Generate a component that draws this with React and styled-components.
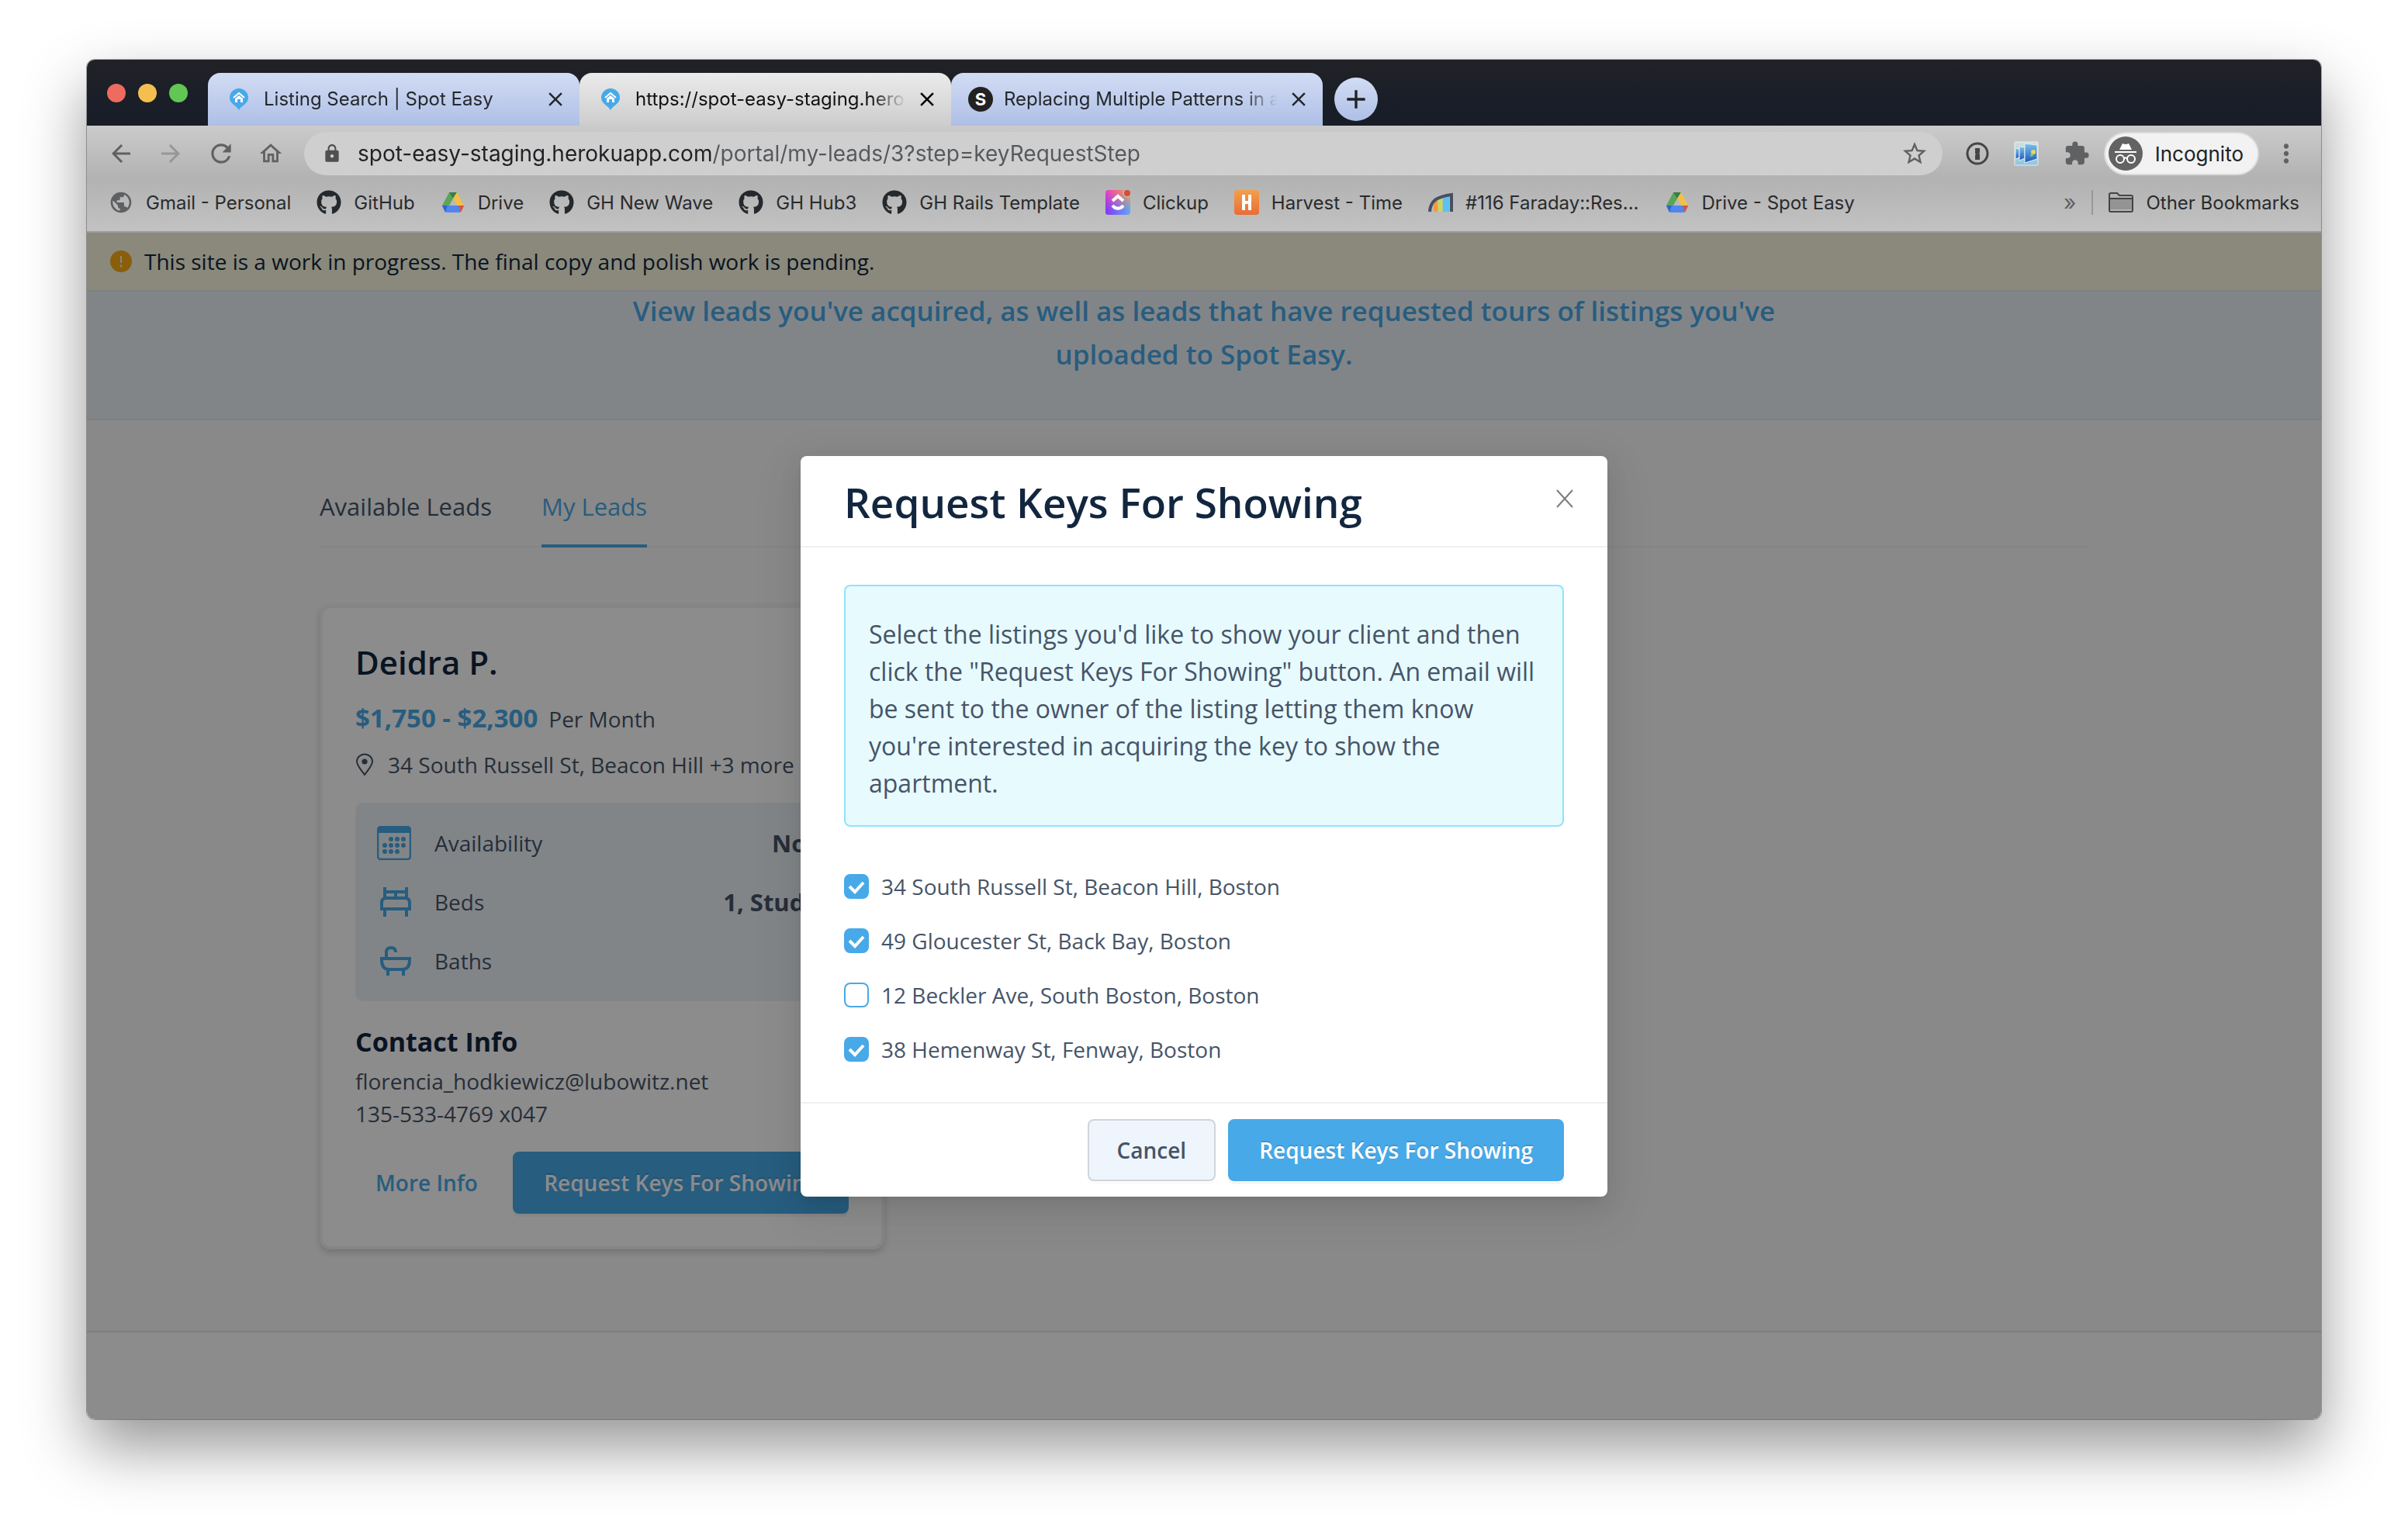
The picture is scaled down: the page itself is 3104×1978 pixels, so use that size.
import React, { useState } from "react";
import styled, { createGlobalStyle } from "styled-components";
import {
  MdArrowBack,
  MdArrowForward,
  MdRefresh,
  MdOutlineHome,
  MdLock,
  MdStarOutline,
  MdExtension,
  MdMoreVert,
  MdPublic,
  MdClose,
  MdAdd,
} from "react-icons/md";
import { FaGithub } from "react-icons/fa";

const browserTabs = [
  { id: 1, title: "Listing Search | Spot Easy", icon: "pin" },
  {
    id: 2,
    title: "https://spot-easy-staging.hero",
    icon: "pin",
    active: true,
  },
  { id: 3, title: "Replacing Multiple Patterns in a", icon: "s" },
];

const bookmarks = [
  { name: "Gmail - Personal", icon: "globe" },
  { name: "GitHub", icon: "github" },
  { name: "Drive", icon: "drive" },
  { name: "GH New Wave", icon: "github" },
  { name: "GH Hub3", icon: "github" },
  { name: "GH Rails Template", icon: "github" },
  { name: "Clickup", icon: "clickup" },
  { name: "Harvest - Time", icon: "harvest" },
  { name: "#116 Faraday::Res...", icon: "bridge" },
  { name: "Drive - Spot Easy", icon: "drive" },
];

const listings = [
  { id: 1, address: "34 South Russell St, Beacon Hill, Boston", checked: true },
  { id: 2, address: "49 Gloucester St, Back Bay, Boston", checked: true },
  { id: 3, address: "12 Beckler Ave, South Boston, Boston", checked: false },
  { id: 4, address: "38 Hemenway St, Fenway, Boston", checked: true },
];

const PinFavicon = () => (
  <svg width="24" height="28" viewBox="0 0 24 28">
    <path
      d="M12 28C9 22 0 20 0 12a12 12 0 0 1 24 0c0 8-9 10-12 16z"
      fill="#48a9e8"
    />
    <path d="M5 12l7-6 7 6" fill="none" stroke="#fff" strokeWidth="2" />
    <path d="M7 13l5-4 5 4v5h-3v-4h-4v4H7z" fill="#fff" />
  </svg>
);

const DriveIcon = () => (
  <svg width="28" height="26" viewBox="0 0 28 26">
    <path d="M9 0h5v9L5 25 0 17z" fill="#5aa55a" />
    <path d="M9 0h10l-5 8z" fill="#3a7d44" />
    <path d="M19 0l9 17h-9L14 8z" fill="#f3c045" />
    <path d="M0 17h9l-5 9z" fill="#2f66d0" />
    <path d="M28 17h-9l5 9z" fill="#dc5142" />
    <path d="M5 17h18l2 3-2 6H5l-2-6z" fill="#5187ec" />
    <path d="M0 17h7l-3 8z" fill="#2f66d0" />
    <path d="M28 17h-7l3 8z" fill="#dc5142" />
    <path d="M9 17l5-9 5 9z" fill="#b9b9b9" />
  </svg>
);

const ClickupIcon = () => (
  <svg width="32" height="32" viewBox="0 0 32 32">
    <defs>
      <linearGradient id="cuTop" x1="0" y1="0" x2="1" y2="0">
        <stop offset="0" stopColor="#e63ccf" />
        <stop offset="1" stopColor="#f0a63c" />
      </linearGradient>
      <linearGradient id="cuBottom" x1="0" y1="0" x2="1" y2="0">
        <stop offset="0" stopColor="#8636f5" />
        <stop offset="1" stopColor="#62a9f2" />
      </linearGradient>
      <linearGradient id="cuFade" x1="0" y1="0" x2="0" y2="1">
        <stop offset="0.1" stopColor="#000" />
        <stop offset="0.8" stopColor="#fff" />
      </linearGradient>
      <mask id="cuMask">
        <rect width="32" height="32" fill="url(#cuFade)" />
      </mask>
    </defs>
    <rect width="32" height="32" rx="4" fill="url(#cuTop)" />
    <rect width="32" height="32" rx="4" fill="url(#cuBottom)" mask="url(#cuMask)" />
    <path d="M9 14l7-6 7 6" fill="none" stroke="#fff" strokeWidth="4" />
    <path d="M9 20c4 5 10 5 14 0" fill="none" stroke="#fff" strokeWidth="4" />
    <circle cx="28" cy="4" r="6" fill="#b4b4b4" />
    <circle cx="28" cy="4" r="4" fill="#de4a33" />
  </svg>
);

const HarvestIcon = () => (
  <svg width="32" height="32" viewBox="0 0 32 32">
    <defs>
      <linearGradient id="harvest" x1="0" y1="0" x2="0" y2="1">
        <stop offset="0" stopColor="#f2a04c" />
        <stop offset="1" stopColor="#e96c36" />
      </linearGradient>
    </defs>
    <rect width="32" height="32" rx="4" fill="url(#harvest)" />
    <path d="M10 6h4v8h4V6h4v20h-4v-8h-4v8h-4z" fill="#fff" />
  </svg>
);

const BridgeIcon = () => (
  <svg width="32" height="26" viewBox="0 0 32 26">
    <path d="M7 25V13l5-3v15z" fill="#f09a45" />
    <path d="M13 25V9l5-1v17z" fill="#c9dc4b" />
    <path d="M19 25V8l8-3v20z" fill="#5cc3ea" />
    <path
      d="M2 25C3 11 10 6 30 3v22"
      fill="none"
      stroke="#475062"
      strokeWidth="4"
    />
  </svg>
);

const FolderIcon = () => (
  <svg width="32" height="26" viewBox="0 0 32 26">
    <path
      d="M1 23V3a2 2 0 0 1 2-2h8l3 3h15a2 2 0 0 1 2 2v17a2 2 0 0 1-2 2H3a2 2 0 0 1-2-2z"
      fill="#b4b4b4"
      stroke="#444"
      strokeWidth="2"
    />
    <path d="M2 9h28v13H2z" fill="#949494" />
    <path d="M1 8h30" stroke="#444" strokeWidth="2" />
  </svg>
);

const IncognitoIcon = () => (
  <svg width="44" height="44" viewBox="0 0 44 44">
    <circle cx="22" cy="22" r="22" fill="#636363" />
    <path d="M14 17l4-8q4 2 8 0l4 8z" fill="#fff" />
    <path d="M8 20h28" stroke="#fff" strokeWidth="2" />
    <g fill="none" stroke="#fff" strokeWidth="2">
      <circle cx="15" cy="29" r="5" />
      <circle cx="29" cy="29" r="5" />
      <path d="M20 28q2-1 4 0" />
    </g>
  </svg>
);

const OnePasswordIcon = () => (
  <svg width="30" height="30" viewBox="0 0 30 30">
    <circle cx="15" cy="15" r="13" fill="none" stroke="#454545" strokeWidth="3" />
    <path d="M12 8h6v6l-1 1 1 1v7h-6v-6l1-1-1-1z" fill="#454545" />
  </svg>
);

const FramesIcon = () => (
  <svg width="32" height="32" viewBox="0 0 32 32">
    <defs>
      <linearGradient id="framesBg" x1="0" y1="0" x2="0" y2="1">
        <stop offset="0" stopColor="#d5dfda" />
        <stop offset="1" stopColor="#8fc4dc" />
      </linearGradient>
      <linearGradient id="framesGlass" x1="0" y1="0" x2="0" y2="1">
        <stop offset="0" stopColor="#7cc4ee" />
        <stop offset="1" stopColor="#1f55b4" />
      </linearGradient>
    </defs>
    <rect x="1" y="1" width="30" height="30" rx="1" fill="url(#framesBg)" stroke="#e6efef" />
    <path d="M2 9l5 1v11l-5 2z" fill="url(#framesGlass)" stroke="#e4f2fa" />
    <path d="M7 7l7 1v14l-7 3z" fill="url(#framesGlass)" stroke="#e4f2fa" />
    <path d="M14 3l16 2v18l-16 5z" fill="url(#framesGlass)" stroke="#e4f2fa" />
    <circle cx="25" cy="14" r="3" fill="#f2d25c" />
    <circle cx="23" cy="18" r="2" fill="#6fcf7c" />
  </svg>
);

const WarningIcon = () => (
  <svg width="28" height="28" viewBox="0 0 28 28">
    <circle cx="14" cy="14" r="14" fill="#faad14" />
    <path d="M14 7v9" stroke="#fbf8df" strokeWidth="2" />
    <circle cx="14" cy="20" r="1.4" fill="#fbf8df" />
  </svg>
);

const LocationIcon = () => (
  <svg width="24" height="30" viewBox="0 0 24 30">
    <path
      d="M12 28C7 21 2 16 2 11a10 9.500 0 0 1 20 0c0 5-5 10-10 17z"
      fill="none"
      stroke="#465468"
      strokeWidth="2"
    />
    <circle cx="12" cy="11" r="3.600" fill="#465468" />
  </svg>
);

const CalendarIcon = () => (
  <svg width="44" height="44" viewBox="0 0 44 44">
    <rect x="1" y="1" width="42" height="42" rx="4" fill="none" stroke="#48a9e8" strokeWidth="2.600" />
    <path d="M1 9V5a4 4 0 0 1 4-4h34a4 4 0 0 1 4 4v4z" fill="#48a9e8" />
    <g fill="#48a9e8">
      {[18, 26, 34].map((x) => (
        <circle key={x} cx={x} cy="17" r="3" />
      ))}
      {[10, 18, 26, 34].map((x) => (
        <circle key={x} cx={x} cy="25" r="3" />
      ))}
      {[10, 18, 26].map((x) => (
        <circle key={x} cx={x} cy="33" r="3" />
      ))}
    </g>
  </svg>
);

const BedIcon = () => (
  <svg width="40" height="38" viewBox="0 0 40 38">
    <g fill="none" stroke="#48a9e8" strokeWidth="4">
      <path d="M6 0v16M34 0v16M6 6h28M20 6v8M6 28v10M34 28v10" />
      <path d="M2 28V20q0-6 6-6h24q6 0 6 6v8z" />
    </g>
  </svg>
);

const BathIcon = () => (
  <svg width="40" height="38" viewBox="0 0 40 38">
    <g fill="none" stroke="#48a9e8" strokeWidth="4">
      <path d="M8 16V8q0-6 6-6t6 6M10 30v8M30 30v8" />
      <path d="M2 16h36v2q0 12-10 12H12Q2 30 2 18z" />
    </g>
  </svg>
);

const bookmarkIcons = {
  globe: <MdPublic size={32} color="#5f6062" />,
  github: <FaGithub size={32} color="#24292e" />,
  drive: <DriveIcon />,
  clickup: <ClickupIcon />,
  harvest: <HarvestIcon />,
  bridge: <BridgeIcon />,
};

const stats = [
  { label: "Availability", value: "Now", icon: <CalendarIcon /> },
  { label: "Beds", value: "1, Studio", icon: <BedIcon /> },
  { label: "Baths", value: "1", icon: <BathIcon /> },
];

const BrowserChrome = () => (
  <header>
    <TabStrip>
      <TrafficLights>
        <Light $color="#ed6b5f" />
        <Light $color="#f5bf4f" />
        <Light $color="#62c655" />
      </TrafficLights>
      {browserTabs.map((tab) => (
        <BrowserTab key={tab.id} $active={tab.active}>
          {tab.icon === "pin" ? <PinFavicon /> : <LetterFavicon>S</LetterFavicon>}
          <TabTitle $active={tab.active}>{tab.title}</TabTitle>
          <PlainButton aria-label="Close tab">
            <MdClose size={30} color={tab.active ? "#000" : "#25282c"} />
          </PlainButton>
        </BrowserTab>
      ))}
      <NewTabButton aria-label="New tab">
        <MdAdd size={40} color="#202124" />
      </NewTabButton>
    </TabStrip>

    <Toolbar>
      <NavRow>
        <NavButtons>
          <PlainButton aria-label="Back">
            <MdArrowBack size={36} />
          </PlainButton>
          <PlainButton aria-label="Forward" disabled>
            <MdArrowForward size={36} />
          </PlainButton>
          <PlainButton aria-label="Reload">
            <MdRefresh size={38} />
          </PlainButton>
          <PlainButton aria-label="Home">
            <MdOutlineHome size={34} />
          </PlainButton>
        </NavButtons>
        <Omnibox>
          <MdLock size={26} color="#505050" />
          <UrlInput
            aria-label="Address"
            defaultValue="spot-easy-staging.herokuapp.com/portal/my-leads/3?step=keyRequestStep"
          />
          <PlainButton aria-label="Bookmark this page">
            <MdStarOutline size={36} />
          </PlainButton>
        </Omnibox>
        <Extensions>
          <PlainButton aria-label="1Password">
            <OnePasswordIcon />
          </PlainButton>
          <PlainButton aria-label="Frames">
            <FramesIcon />
          </PlainButton>
          <PlainButton aria-label="Extensions">
            <MdExtension size={34} />
          </PlainButton>
        </Extensions>
        <IncognitoPill>
          <IncognitoIcon />
          Incognito
        </IncognitoPill>
        <PlainButton aria-label="Menu">
          <MdMoreVert size={38} />
        </PlainButton>
      </NavRow>

      <BookmarkBar>
        {bookmarks.map((bookmark) => (
          <Bookmark key={bookmark.name} href="#">
            <BookmarkIcon>{bookmarkIcons[bookmark.icon]}</BookmarkIcon>
            {bookmark.name}
          </Bookmark>
        ))}
        <OtherBookmarks>
          <More aria-label="More bookmarks">»</More>
          <Divider />
          <Bookmark href="#">
            <BookmarkIcon>
              <FolderIcon />
            </BookmarkIcon>
            Other Bookmarks
          </Bookmark>
        </OtherBookmarks>
      </BookmarkBar>
    </Toolbar>
  </header>
);

const LeadCard = () => (
  <Card>
    <LeadName>Deidra P.</LeadName>
    <PriceRow>
      <Price>$1,750 - $2,300</Price>
      Per Month
    </PriceRow>
    <AddressRow>
      <LocationIcon />
      34 South Russell St, Beacon Hill +3 more
    </AddressRow>
    <Stats>
      {stats.map((stat) => (
        <StatRow key={stat.label}>
          <StatIcon>{stat.icon}</StatIcon>
          {stat.label}
          <StatValue>{stat.value}</StatValue>
        </StatRow>
      ))}
    </Stats>
    <ContactTitle>Contact Info</ContactTitle>
    <ContactLine>florencia_hodkiewicz@lubowitz.net</ContactLine>
    <ContactLine>135-533-4769 x047</ContactLine>
    <CardActions>
      <LinkButton>More Info</LinkButton>
      <PrimaryButton>Request Keys For Showing</PrimaryButton>
    </CardActions>
  </Card>
);

const KeyRequestModal = () => {
  const [items, setItems] = useState(listings);

  const handleToggle = (id) => {
    setItems(
      items.map((item) =>
        item.id === id ? { ...item, checked: !item.checked } : item
      )
    );
  };

  return (
    <Overlay>
      <Modal role="dialog" aria-labelledby="modal-title">
        <ModalHeader>
          <ModalTitle id="modal-title">Request Keys For Showing</ModalTitle>
          <CloseButton aria-label="Close">
            <svg width="22" height="24" viewBox="0 0 22 24">
              <path d="M1 1l20 22M21 1L1 23" stroke="#7d7d7d" strokeWidth="2" />
            </svg>
          </CloseButton>
        </ModalHeader>
        <ModalBody>
          <Notice>
            Select the listings you'd like to show your client and then click
            the "Request Keys For Showing" button. An email will be sent to the
            owner of the listing letting them know you're interested in
            acquiring the key to show the apartment.
          </Notice>
          <ListingOptions>
            {items.map((item) => (
              <ListingOption key={item.id}>
                <CheckboxBox>
                  <Checkbox
                    type="checkbox"
                    checked={item.checked}
                    onChange={() => handleToggle(item.id)}
                  />
                  {item.checked && (
                    <CheckMark width="32" height="32" viewBox="0 0 32 32">
                      <path
                        d="M7 16l7 7 11-12"
                        fill="none"
                        stroke="#fff"
                        strokeWidth="4"
                      />
                    </CheckMark>
                  )}
                </CheckboxBox>
                {item.address}
              </ListingOption>
            ))}
          </ListingOptions>
        </ModalBody>
        <ModalFooter>
          <SecondaryButton>Cancel</SecondaryButton>
          <PrimaryButton>Request Keys For Showing</PrimaryButton>
        </ModalFooter>
      </Modal>
    </Overlay>
  );
};

const App = () => (
  <Desktop>
    <GlobalStyle />
    <BrowserWindow>
      <BrowserChrome />
      <Viewport>
        <Banner>
          <WarningIcon />
          This site is a work in progress. The final copy and polish work is
          pending.
        </Banner>
        <Hero>
          <HeroText>
            View leads you've acquired, as well as leads that have requested
            tours of listings you've uploaded to Spot Easy.
          </HeroText>
        </Hero>
        <Main>
          <Content>
            <PageTabs>
              <PageTab href="#">Available Leads</PageTab>
              <PageTab href="#" $active>
                My Leads
              </PageTab>
            </PageTabs>
            <LeadCard />
          </Content>
        </Main>
        <Footer />
        <KeyRequestModal />
      </Viewport>
    </BrowserWindow>
  </Desktop>
);

const GlobalStyle = createGlobalStyle`
  * {
    box-sizing: border-box;
  }

  body {
    margin: 0;
    background: #fff;
  }

  h1, h2, h3, p {
    margin: 0;
  }

  a {
    text-decoration: none;
  }

  button, input {
    font: inherit;
  }

  svg {
    display: block;
    flex-shrink: 0;
  }
`;

const Desktop = styled.div`
  display: flex;
  min-height: 100vh;
  padding: 77px 112px 148px;
`;

const BrowserWindow = styled.div`
  flex: 1;
  min-width: 0;
  display: flex;
  flex-direction: column;
  overflow: hidden;
  border-radius: 10px;
  box-shadow: 0 0 0 1px rgba(0, 0, 0, 0.3), 0 36px 80px rgba(0, 0, 0, 0.42);
  font-family: Inter, "Liberation Sans", sans-serif;
`;

const TabStrip = styled.div`
  display: flex;
  align-items: flex-end;
  height: 85px;
  background: linear-gradient(#212226, #1a1e28 60%, #191d27);
`;

const TrafficLights = styled.div`
  display: flex;
  align-self: center;
  gap: 16px;
  width: 156px;
  padding-left: 26px;
`;

const Light = styled.span`
  width: 24px;
  height: 24px;
  border-radius: 50%;
  background: ${({ $color }) => $color};
`;

const BrowserTab = styled.div`
  display: flex;
  align-items: center;
  width: 479px;
  height: 68px;
  padding: 0 16px 0 28px;
  border-radius: 16px 16px 0 0;
  background: ${({ $active }) =>
    $active
      ? "linear-gradient(#ebebeb, #cdcdcd)"
      : "linear-gradient(#d2dcf4, #aebfe6)"};
`;

const LetterFavicon = styled.span`
  display: flex;
  align-items: center;
  justify-content: center;
  width: 32px;
  height: 32px;
  margin: 0 -6px;
  border-radius: 50%;
  background: #222;
  color: #fff;
  font-size: 22px;
  font-weight: 700;
`;

const TabTitle = styled.span`
  flex: 1;
  min-width: 0;
  margin: 0 12px 0 20px;
  overflow: hidden;
  white-space: nowrap;
  font-size: 24px;
  line-height: 32px;
  color: ${({ $active }) => ($active ? "#111" : "#25282c")};
  mask-image: linear-gradient(to right, #000 87%, transparent);
`;

const PlainButton = styled.button`
  display: flex;
  align-items: center;
  justify-content: center;
  padding: 0;
  border: none;
  background: none;
  color: #606163;

  &:disabled {
    color: #979797;
  }
`;

const NewTabButton = styled(PlainButton)`
  width: 56px;
  height: 56px;
  margin: 0 0 6px 15px;
  border-radius: 50%;
  background: linear-gradient(#d2dcf4, #aebfe6);
`;

const Toolbar = styled.div`
  height: 138px;
  padding: 8px 26px 0;
  border-bottom: 2px solid #9c9c9c;
  background: linear-gradient(#cbcbcb, #b2b2b2 50%, #c2c2c2);
`;

const NavRow = styled.div`
  display: flex;
  align-items: center;
  height: 56px;
`;

const NavButtons = styled.div`
  display: flex;
  gap: 28px;
  width: 254px;
`;

const Omnibox = styled.div`
  flex: 1;
  display: flex;
  align-items: center;
  height: 56px;
  padding: 0 18px 0 23px;
  border-radius: 28px;
  background: #cfcfcf;
`;

/* host part of the url is darker than the path */
const UrlInput = styled.input`
  flex: 1;
  min-width: 0;
  padding: 0;
  margin-left: 20px;
  border: none;
  outline: none;
  font-size: 28px;
  color: transparent;
  background: linear-gradient(to right, #202124 456px, #55585c 456px);
  background-clip: text;
`;

const Extensions = styled.div`
  display: flex;
  align-items: center;
  gap: 32px;
  margin: 0 18px 0 30px;
`;

const IncognitoPill = styled.div`
  display: flex;
  align-items: center;
  gap: 16px;
  height: 56px;
  margin-right: 16px;
  padding: 0 18px 0 4px;
  border: 2px solid #dadada;
  border-radius: 28px;
  background: #f2f2f2;
  color: #202124;
  font-size: 26px;
`;

const BookmarkBar = styled.nav`
  display: flex;
  align-items: center;
  gap: 33px;
  height: 70px;
  padding: 0 2px;
`;

const Bookmark = styled.a`
  display: flex;
  align-items: center;
  gap: 16px;
  white-space: nowrap;
  font-size: 24px;
  color: #2a2b2d;
`;

const BookmarkIcon = styled.span`
  display: flex;
  justify-content: center;
  width: 32px;
`;

const OtherBookmarks = styled.div`
  display: flex;
  align-items: center;
  gap: 20px;
  margin-left: auto;
`;

const More = styled(PlainButton)`
  font-size: 28px;
`;

const Divider = styled.span`
  width: 2px;
  height: 32px;
  background: #989898;
`;

const Viewport = styled.div`
  flex: 1;
  position: relative;
  display: flex;
  flex-direction: column;
  background: #fff;
  color: #465468;
  font-family: "Open Sans", "Noto Sans", sans-serif;
  font-size: 28px;
`;

const Banner = styled.div`
  display: flex;
  align-items: center;
  gap: 16px;
  height: 76px;
  padding: 0 30px;
  border-bottom: 2px solid #e2e8f0;
  background: #fbf9e0;
  color: #12263f;
`;

/* scrolled a little way under the banner */
const Hero = styled.section`
  display: flex;
  align-items: flex-end;
  justify-content: center;
  height: 166px;
  overflow: hidden;
  padding-bottom: 55px;
  border-bottom: 2px solid #e2e8f0;
  background: #edf2f7;
`;

const HeroText = styled.p`
  max-width: 1520px;
  font-size: 35px;
  line-height: 56px;
  font-weight: 600;
  text-align: center;
  color: #48a9e8;
`;

const Main = styled.main`
  flex: 1;
  padding: 0 300px 104px;
  background: #f9f9f9;
`;

const Content = styled.div`
  max-width: 2280px;
  margin: 0 auto;
`;

const PageTabs = styled.nav`
  display: flex;
  gap: 64px;
  margin-bottom: 74px;
  box-shadow: inset 0 -2px #f0f0f0;
`;

const PageTab = styled.a`
  padding: 90px 0 28px;
  line-height: 42px;
  border-bottom: 4px solid ${({ $active }) => ($active ? "#48a9e8" : "transparent")};
  font-size: 31px;
  color: ${({ $active }) => ($active ? "#48a9e8" : "#465468")};
`;

const Card = styled.article`
  width: 728px;
  padding: 42px;
  border: 4px solid #f0f3f6;
  border-radius: 14px;
  background: #fff;
  box-shadow: 0 4px 8px rgba(0, 0, 0, 0.16);
  font-weight: 500;
`;

const LeadName = styled.h2`
  font-size: 42px;
  line-height: 56px;
  font-weight: 600;
  color: #12263f;
`;

const PriceRow = styled.div`
  display: flex;
  align-items: baseline;
  gap: 14px;
  margin-top: 20px;
  line-height: 48px;
`;

const Price = styled.strong`
  font-size: 33px;
  font-weight: 700;
  color: #48a9e8;
`;

const AddressRow = styled.div`
  display: flex;
  align-items: center;
  gap: 18px;
  margin: 14px 0 28px;
  white-space: nowrap;
  line-height: 42px;
`;

const Stats = styled.div`
  padding: 14px 28px;
  border-radius: 10px;
  background: #edf2f7;
`;

const StatRow = styled.div`
  display: flex;
  align-items: center;
  height: 76px;
`;

const StatIcon = styled.span`
  display: flex;
  justify-content: flex-end;
  width: 44px;
  margin-right: 30px;
`;

const StatValue = styled.strong`
  margin-left: auto;
  font-size: 31px;
  font-weight: 700;
`;

const ContactTitle = styled.h3`
  margin: 26px 0 4px;
  font-size: 34px;
  line-height: 52px;
  font-weight: 700;
  color: #12263f;
`;

const ContactLine = styled.p`
  line-height: 42px;
`;

const CardActions = styled.div`
  display: flex;
  justify-content: space-between;
  margin-top: 28px;
`;

const BaseButton = styled.button`
  height: 80px;
  padding: 0 38px;
  border: 2px solid transparent;
  border-radius: 8px;
  font-size: 28px;
  font-weight: 600;
  white-space: nowrap;
`;

const PrimaryButton = styled(BaseButton)`
  border-color: #48a9e8;
  background: #48a9e8;
  color: #fff;
  text-shadow: 0 -2px 0 rgba(0, 0, 0, 0.12);
  box-shadow: 0 4px 0 rgba(0, 0, 0, 0.04);
`;

const SecondaryButton = styled(BaseButton)`
  padding: 0 36px;
  border-color: #d0d5da;
  background: #eff5fd;
  color: #465468;
  box-shadow: 0 4px 0 rgba(0, 0, 0, 0.015);
`;

const LinkButton = styled(BaseButton)`
  padding: 0 24px;
  background: none;
  color: #48a9e8;
`;

const Footer = styled.footer`
  height: 114px;
  border-top: 2px solid #e6e6e6;
  background: #fff;
`;

const Overlay = styled.div`
  position: absolute;
  inset: 0;
  display: flex;
  align-items: flex-start;
  justify-content: center;
  padding-top: 288px;
  background: rgba(0, 0, 0, 0.45);
`;

const Modal = styled.section`
  width: 1040px;
  border-radius: 8px;
  background: #fff;
  box-shadow: 0 6px 12px -8px rgba(0, 0, 0, 0.12),
    0 12px 32px rgba(0, 0, 0, 0.08), 0 18px 56px 16px rgba(0, 0, 0, 0.05);
`;

const ModalHeader = styled.div`
  display: flex;
  align-items: flex-start;
  justify-content: space-between;
  height: 118px;
  padding: 24px 44px 0 56px;
  border-bottom: 2px solid #f0f0f0;
`;

const ModalTitle = styled.h1`
  font-size: 53px;
  line-height: 72px;
  font-weight: 600;
  color: #12263f;
`;

const CloseButton = styled(PlainButton)`
  height: 62px;
`;

const ModalBody = styled.div`
  padding: 48px 56px 47px;
`;

const Notice = styled.p`
  padding: 38px 28px 30px 30px;
  border: 2px solid #91e3fa;
  border-radius: 8px;
  background: #e7fafe;
  font-size: 32px;
  line-height: 48px;
`;

const ListingOptions = styled.div`
  display: grid;
  gap: 28px;
  margin-top: 56px;
`;

const ListingOption = styled.label`
  display: flex;
  align-items: center;
  gap: 16px;
  line-height: 42px;
`;

const CheckboxBox = styled.span`
  display: grid;
  width: 32px;
  height: 32px;
`;

const Checkbox = styled.input`
  grid-area: 1 / 1;
  appearance: none;
  width: 32px;
  height: 32px;
  margin: 0;
  border: 2px solid #48a9e8;
  border-radius: 8px;
  background: #fff;

  &:checked {
    background: #48a9e8;
  }
`;

const CheckMark = styled.svg`
  grid-area: 1 / 1;
  pointer-events: none;
`;

const ModalFooter = styled.div`
  display: flex;
  justify-content: flex-end;
  gap: 16px;
  padding: 20px 56px;
  border-top: 2px solid #f0f0f0;
`;

export default App;
